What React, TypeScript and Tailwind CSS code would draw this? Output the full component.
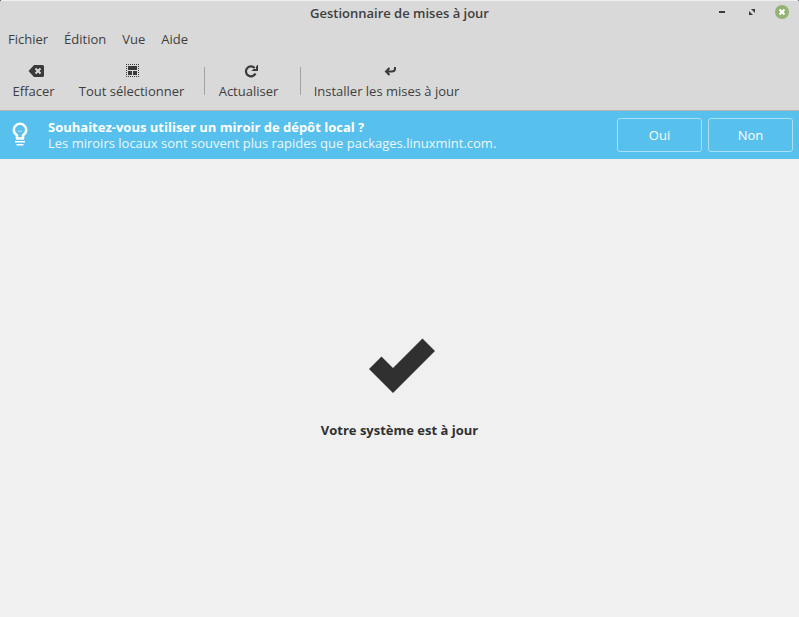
import type { ReactNode } from "react";

const menus = ["Fichier", "Édition", "Vue", "Aide"];

type ToolProps = { label: string; width: string; children: ReactNode };

function Tool({ label, width, children }: ToolProps) {
  return (
    <button type="button" className={`flex flex-col items-center gap-1 whitespace-nowrap ${width}`}>
      <svg width="24" height="16" viewBox="0 0 24 16" fill="#3a3a3a" aria-hidden="true">
        {children}
      </svg>
      <span className="leading-4">{label}</span>
    </button>
  );
}

function Divider() {
  return <div className="ml-2 h-7 w-px self-center bg-[#a3a3a3]" />;
}

function TitleBar() {
  return (
    <header className="grid h-7 grid-cols-[1fr_auto_1fr] items-center border-t border-[#f0f0f0] pb-1">
      <span />
      <h1 className="font-semibold leading-4">Gestionnaire de mises à jour</h1>
      <div className="flex items-center justify-end gap-4 pr-2.5">
        <button type="button" aria-label="Réduire">
          <svg width="14" height="14" viewBox="0 0 14 14" className="block">
            <path d="M4 5h6v2H4z" fill="#3a3a3a" />
          </svg>
        </button>
        <button type="button" aria-label="Agrandir">
          <svg width="14" height="14" viewBox="0 0 14 14" className="block">
            <path d="M6 3h4v4zM4 5v4h4z" fill="#3a3a3a" />
          </svg>
        </button>
        <button type="button" aria-label="Fermer">
          <svg width="14" height="14" viewBox="0 0 14 14" className="block overflow-visible">
            <circle cx="7" cy="6" r="7" fill="#92b372" />
            <path d="M4.500 3.500l5 5M9.500 3.500l-5 5" stroke="#fff" strokeWidth="2" />
          </svg>
        </button>
      </div>
    </header>
  );
}

export default function App() {
  return (
    <div className="bg-[#3c3c3c]">
      <div className="flex min-h-screen flex-col overflow-hidden rounded-t-[3px] bg-[#f0f0f0] font-['Open_Sans','Noto_Sans',sans-serif] text-[13px] text-[#3e3e3e]">
        <div className="border-b border-[#b5b5b5] bg-[#d9d9d9]">
          <TitleBar />
          <nav className="flex h-[22px] items-center gap-4 px-2">
            {menus.map((m) => (
              <button key={m} type="button" className="leading-4">
                {m}
              </button>
            ))}
          </nav>
          <div className="flex pt-[13px] pb-[11px]">
            <Tool label="Effacer" width="w-[67px]">
              <path d="M6.500 8L12 2h8.500q1.500 0 1.500 1.500v9q0 1.500-1.500 1.500H12z" />
              <path d="M13.500 5.500l5 5M18.500 5.500l-5 5" stroke="#d9d9d9" strokeWidth="2" />
            </Tool>
            <Tool label="Tout sélectionner" width="w-[129px]">
              <path
                d="M6 1.500h13M6 13.500h13M6.500 3v10M18.500 3v10"
                fill="none"
                stroke="#3a3a3a"
                strokeDasharray="1 1"
              />
              <path d="M8 3h9v4H8zM8 8h4v4H8zM13 8h4v4h-4z" />
            </Tool>
            <Divider />
            <Tool label="Actualiser" width="w-[87px]">
              <path d="M18.500 10.500a5 5 0 1 1-.8-5.500" fill="none" stroke="#3a3a3a" strokeWidth="2.200" />
              <path d="M21 1.500V8h-6.500l2-2H19V3.500z" />
            </Tool>
            <Divider />
            <Tool label="Installer les mises à jour" width="w-[171px]">
              <path
                d="M20 4v1.500q0 3-3 3h-5.500M14.500 5L11 8.500l3.500 3.500"
                fill="none"
                stroke="#3a3a3a"
                strokeWidth="2"
              />
            </Tool>
          </div>
        </div>

        <section className="flex h-12 items-center bg-[#57c0ed] pr-1.5 text-white">
          <svg width="40" height="32" viewBox="0 0 40 32" className="shrink-0" aria-hidden="true">
            <path
              d="M17 19.500v-3.200c-2-1.300-3.200-3.200-3.200-5.300a6.200 6.200 0 0 1 12.400 0c0 2.100-1.200 4-3.200 5.300v3.200z"
              fill="none"
              stroke="#fff"
              strokeWidth="2.500"
            />
            <path d="M18 11.500h4v1.500h-4z" fill="#9bd8f4" />
            <path d="M15 22h10v1.500H15zM16.500 25h7v1.500h-7z" fill="#fff" />
          </svg>
          <div className="ml-2 flex-1 leading-4">
            <p className="font-bold">Souhaitez-vous utiliser un miroir de dépôt local ?</p>
            <p className="text-[#edf8fd]">
              Les miroirs locaux sont souvent plus rapides que packages.linuxmint.com.
            </p>
          </div>
          <div className="flex gap-1.5">
            <button type="button" className="h-[34px] w-[85px] rounded-[3px] border border-[#abdff6] pt-0.5">
              Oui
            </button>
            <button type="button" className="h-[34px] w-[85px] rounded-[3px] border border-[#abdff6] pt-0.5">
              Non
            </button>
          </div>
        </section>

        <main className="flex flex-1 flex-col items-center justify-center pb-1">
          <svg width="72" height="64" viewBox="0 0 72 64" aria-hidden="true">
            <path d="M5 35l12.500-12.500L29 34 58.500 4.500 71 17 29 59z" fill="#303030" />
          </svg>
          <p className="mt-6 font-bold leading-4 text-[#303030]">Votre système est à jour</p>
        </main>
      </div>
    </div>
  );
}
